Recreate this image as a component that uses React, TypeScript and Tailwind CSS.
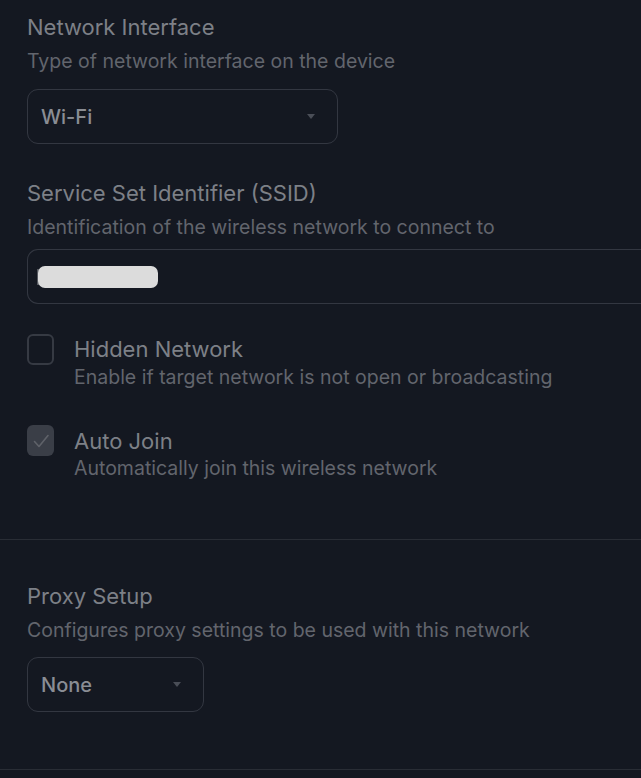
import React, { useState } from 'react';

const Caret = () => (
    <svg width="8" height="5" viewBox="0 0 8 5" className="text-[#4a4e57]">
        <path d="M0 0h8L4 5z" fill="currentColor" />
    </svg>
);

const Select = ({ value, width }: { value: string; width: string }) => (
    <div className={`${width} h-[55px] flex items-center justify-between pl-[13px] pr-[22px] border border-[#333741] rounded-[11px]`}>
        <span className="text-[20px] font-medium text-[#8a8d94]">{value}</span>
        <Caret />
    </div>
);

const Check = ({ checked, onToggle }: { checked: boolean; onToggle: () => void }) => (
    <button
        onClick={onToggle}
        className={`w-[27px] h-[31px] shrink-0 rounded-[6px] flex items-center justify-center ${checked ? 'bg-[#3a3e47]' : 'border-2 border-[#363a43]'}`}
    >
        {checked && (
            <svg width="18" height="18" viewBox="0 0 18 18" fill="none" stroke="#5f6269" strokeWidth={1.6} strokeLinecap="round" strokeLinejoin="round">
                <path d="M2.5 9.5l4.5 5L16 3.5" />
            </svg>
        )}
    </button>
);

const App: React.FC = () => {
    const [hidden, setHidden] = useState(false);
    const [autoJoin, setAutoJoin] = useState(true);

    return (
        <div className="min-h-[778px] w-[641px] overflow-hidden bg-[#141821] text-[#7d8087]" style={{ fontFamily: 'Inter, "Noto Sans", sans-serif' }}>
            <div className="pl-[27px] pt-[13px]">
                <h2 className="text-[22px] leading-[28px]">Network Interface</h2>
                <p className="mt-[8px] text-[19.5px] leading-[24px] text-[#62656d]">Type of network interface on the device</p>
                <div className="mt-[16px]">
                    <Select value="Wi-Fi" width="w-[311px]" />
                </div>

                <h2 className="mt-[35px] text-[22px] leading-[28px]">Service Set Identifier (SSID)</h2>
                <p className="mt-[8px] text-[19.5px] leading-[24px] text-[#62656d]">Identification of the wireless network to connect to</p>
                <div className="mt-[10px] h-[55px] border border-[#333741] rounded-l-[11px] border-r-0 flex items-center pl-[9px]">
                    <div className="w-[2px] h-[16px] bg-[#55585f]" />
                    <div className="ml-[-1px] w-[120px] h-[22px] rounded-[7px] bg-[#dcdcdc]" />
                </div>

                <div className="mt-[30px] flex gap-[20px]">
                    <Check checked={hidden} onToggle={() => setHidden(!hidden)} />
                    <div>
                        <div className="text-[22px] leading-[28px] mt-[1px]">Hidden Network</div>
                        <div className="text-[19.5px] leading-[24px] mt-[2px] text-[#62656d]">Enable if target network is not open or broadcasting</div>
                    </div>
                </div>

                <div className="mt-[36px] flex gap-[20px]">
                    <Check checked={autoJoin} onToggle={() => setAutoJoin(!autoJoin)} />
                    <div>
                        <div className="text-[22px] leading-[28px] mt-[2px]">Auto Join</div>
                        <div className="text-[19.5px] leading-[24px] mt-[1px] text-[#62656d]">Automatically join this wireless network</div>
                    </div>
                </div>
            </div>

            <div className="mt-[59px] border-t border-[#292d35]" />

            <div className="pl-[27px] pt-[42px] pb-[57px]">
                <h2 className="text-[22px] leading-[28px]">Proxy Setup</h2>
                <p className="mt-[8px] text-[19.5px] leading-[24px] text-[#62656d]">Configures proxy settings to be used with this network</p>
                <div className="mt-[15px]">
                    <Select value="None" width="w-[177px]" />
                </div>
            </div>

            <div className="border-t border-[#292d35]" />
        </div>
    );
};

export default App;
